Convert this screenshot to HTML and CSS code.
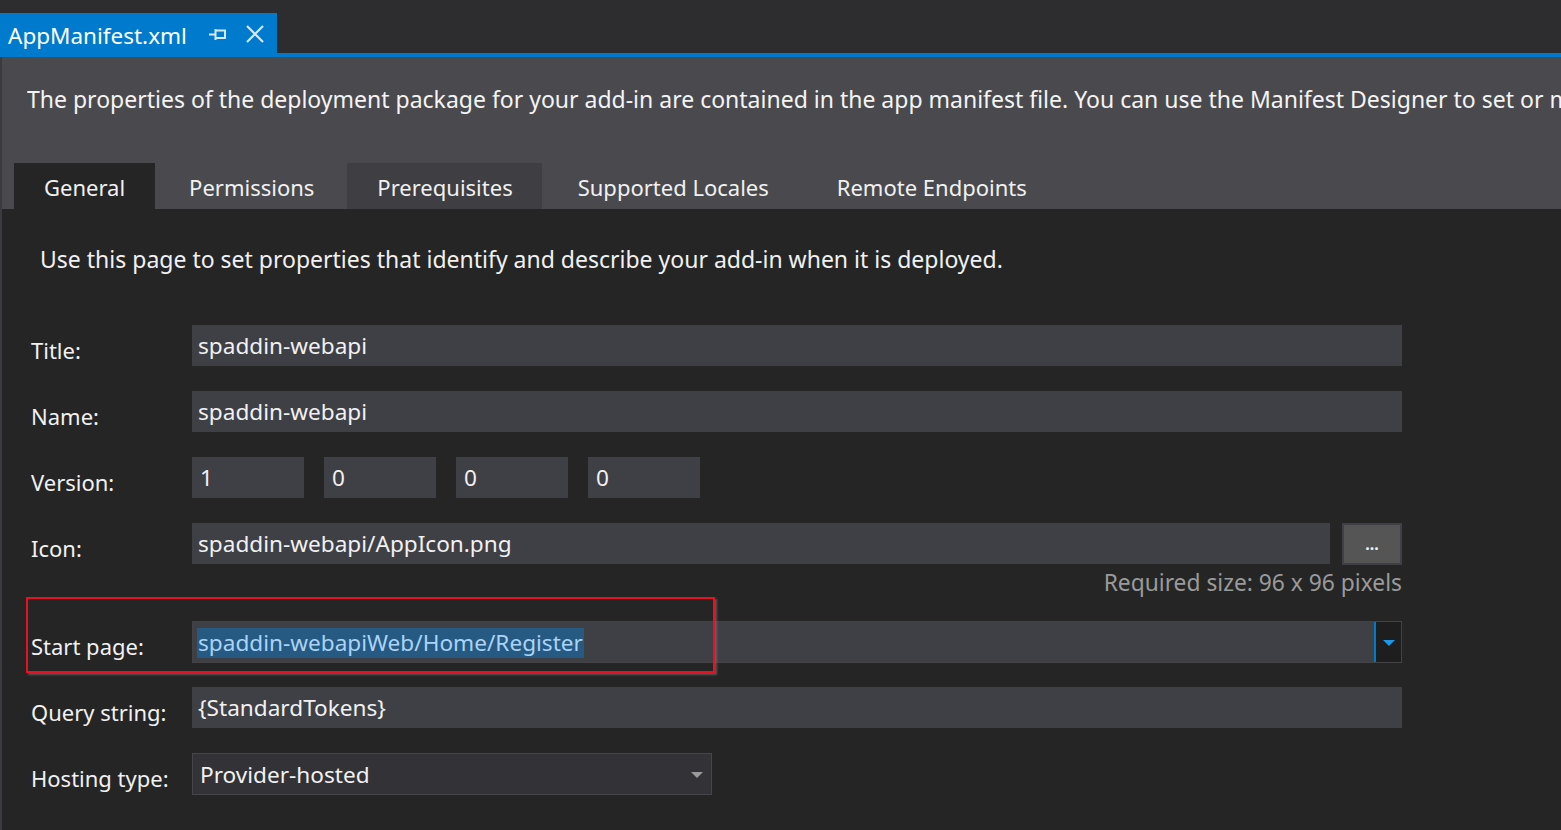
FILE: index.html
```html
<!DOCTYPE html>
<html lang="en">
<head>
<meta charset="utf-8">
<title>AppManifest.xml</title>
<link rel="stylesheet" href="styles.css">
</head>
<body>
<div class="doc-bar">
  <div class="doc-tab">
    <span class="doc-title">AppManifest.xml</span>
    <svg class="pin" width="20" height="18" viewBox="0 0 20 18"><path d="M1 9.5H7 M7.5 4V15 M7.5 5.5H17V13H7.5" fill="none" stroke="#d6e9f7" stroke-width="2"/></svg>
    <svg class="close" width="20" height="20" viewBox="0 0 20 20"><path d="M2 2L18 18M18 2L2 18" stroke="#d6e9f7" stroke-width="2.2"/></svg>
  </div>
</div>
<div class="editor">
  <div class="header">
    <p class="desc">The properties of the deployment package for your add-in are contained in the app manifest file. You can use the Manifest Designer to set or modify one or more of the properties.</p>
    <nav class="tabs">
      <span class="tab t-general active">General</span>
      <span class="tab t-perm">Permissions</span>
      <span class="tab t-prereq alt">Prerequisites</span>
      <span class="tab t-locales">Supported Locales</span>
      <span class="tab t-remote">Remote Endpoints</span>
    </nav>
  </div>
  <div class="content">
    <p class="intro">Use this page to set properties that identify and describe your add-in when it is deployed.</p>
    <div class="form">
      <div class="row">
        <label class="lbl">Title:</label>
        <div class="field wide">spaddin-webapi</div>
      </div>
      <div class="row">
        <label class="lbl">Name:</label>
        <div class="field wide">spaddin-webapi</div>
      </div>
      <div class="row">
        <label class="lbl">Version:</label>
        <div class="versions">
          <div class="field ver">1</div>
          <div class="field ver">0</div>
          <div class="field ver">0</div>
          <div class="field ver">0</div>
        </div>
      </div>
      <div class="row icon-row">
        <label class="lbl">Icon:</label>
        <div class="icon-group">
          <div class="icon-line">
            <div class="field icon-field">spaddin-webapi/AppIcon.png</div>
            <div class="browse">...</div>
          </div>
          <div class="hint">Required size: 96 x 96 pixels</div>
        </div>
      </div>
      <div class="row start-row">
        <div class="highlight"></div>
        <label class="lbl">Start page:</label>
        <div class="combo">
          <div class="combo-text"><span class="sel">spaddin-webapiWeb/Home/Register</span></div>
          <div class="combo-btn"><svg width="12" height="7" viewBox="0 0 12 7"><path d="M0 0H12L6 6Z" fill="#1c97ea"/></svg></div>
        </div>
      </div>
      <div class="row">
        <label class="lbl">Query string:</label>
        <div class="field wide">{StandardTokens}</div>
      </div>
      <div class="row">
        <label class="lbl">Hosting type:</label>
        <div class="select">
          <span>Provider-hosted</span>
          <svg width="12" height="7" viewBox="0 0 12 7"><path d="M0 0H12L6 6Z" fill="#9a9a9a"/></svg>
        </div>
      </div>
    </div>
  </div>
</div>
</body>
</html>
```

FILE: styles.css
```css
* { box-sizing: border-box; }
html, body { margin: 0; padding: 0; }
body {
  width: 1561px;
  height: 830px;
  overflow: hidden;
  background: #252526;
  font-family: "Noto Sans", "Open Sans", sans-serif;
  color: #f1f1f1;
}
.doc-bar {
  height: 57px;
  padding-top: 13px;
  background: #2d2d30;
  border-bottom: 4px solid #007acc;
  display: flex;
}
.doc-tab {
  width: 277px;
  height: 40px;
  background: #007acc;
  display: flex;
  align-items: center;
  padding-left: 8px;
  color: #ffffff;
}
.doc-title {
  font-size: 22.5px;
  line-height: 40px;
  padding-top: 6px;
}
.pin { margin-left: 21px; margin-top: 2px; }
.close { margin-left: 17px; margin-top: 2px; }
.editor {
  height: 773px;
  border-left: 2px solid #3b3b3f;
}
.header {
  background: #4a4a4e;
  height: 152px;
  padding-top: 27px;
}
.desc {
  margin: 0 0 0 25px;
  font-size: 23px;
  line-height: 30px;
  white-space: nowrap;
  overflow: hidden;
  color: #f4f4f4;
}
.tabs {
  display: flex;
  margin: 49px 0 0 12px;
  height: 46px;
}
.tab {
  font-size: 22px;
  line-height: 48px;
  color: #f1f1f1;
  white-space: nowrap;
}
.t-general { padding: 0 30px; }
.t-perm { padding: 0 33px 0 34px; }
.t-prereq { padding: 0 29px 0 30px; }
.t-locales { padding: 0 36px; }
.t-remote { padding: 0 32px; }
.tab.active { background: #252526; }
.tab.alt { background: #3e3e43; }
.content {
  background: #252526;
  padding-top: 35px;
}
.intro {
  margin: 0 0 0 38px;
  font-size: 23px;
  line-height: 30px;
  color: #f1f1f1;
}
.form {
  margin-top: 51px;
  display: flex;
  flex-direction: column;
  gap: 25px;
}
.row {
  display: flex;
  align-items: flex-start;
  position: relative;
}
.lbl {
  width: 190px;
  padding-left: 29px;
  padding-top: 10px;
  font-size: 22px;
  line-height: 30px;
  color: #f1f1f1;
  white-space: nowrap;
  flex: none;
}
.field {
  height: 41px;
  background: #3f3f46;
  font-size: 22.6px;
  line-height: 41px;
  padding: 0 6px;
  color: #f1f1f1;
  white-space: nowrap;
}
.wide { width: 1210px; }
.versions { display: flex; gap: 20px; }
.ver { width: 112px; padding: 0 8px; }
.icon-group { width: 1210px; }
.icon-line { display: flex; gap: 12px; }
.icon-field { width: 1138px; }
.browse {
  width: 60px;
  height: 42px;
  background: #555555;
  border: 2px solid #3f3f46;
  color: #f1f1f1;
  font-size: 16px;
  text-align: center;
  line-height: 38px;
  font-weight: bold;
}
.hint {
  text-align: right;
  font-size: 22.8px;
  line-height: 30px;
  margin-top: 3px;
  color: #9a9a9a;
}
.icon-row { margin-bottom: -2px; }
.start-row { margin-bottom: -1px; }
.highlight {
  position: absolute;
  left: 24px;
  top: -24px;
  width: 689px;
  height: 76px;
  border: 2px solid #e81123;
  box-shadow: 2px 2px 2px rgba(120,120,120,0.6);
  pointer-events: none;
}
.combo {
  width: 1210px;
  height: 42px;
  border: 1px solid #434346;
  background: #3f3f46;
  display: flex;
}
.combo-text {
  flex: 1;
  padding: 6px 4px 0 4px;
}
.sel {
  display: inline-block;
  background: #265a82;
  color: #a9d4f7;
  font-size: 22.6px;
  line-height: 30px;
  padding: 0 1px;
}
.combo-btn {
  width: 27px;
  background: #1e1e1e;
  border-left: 2px solid #007acc;
  display: flex;
  align-items: center;
  justify-content: center;
  padding-top: 3px;
}
.select {
  width: 520px;
  height: 42px;
  background: #333337;
  border: 1px solid #46464a;
  display: flex;
  align-items: center;
  justify-content: space-between;
  padding: 0 8px 0 7px;
  font-size: 22.6px;
  color: #f1f1f1;
}
.select svg { margin-top: 2px; }
```
